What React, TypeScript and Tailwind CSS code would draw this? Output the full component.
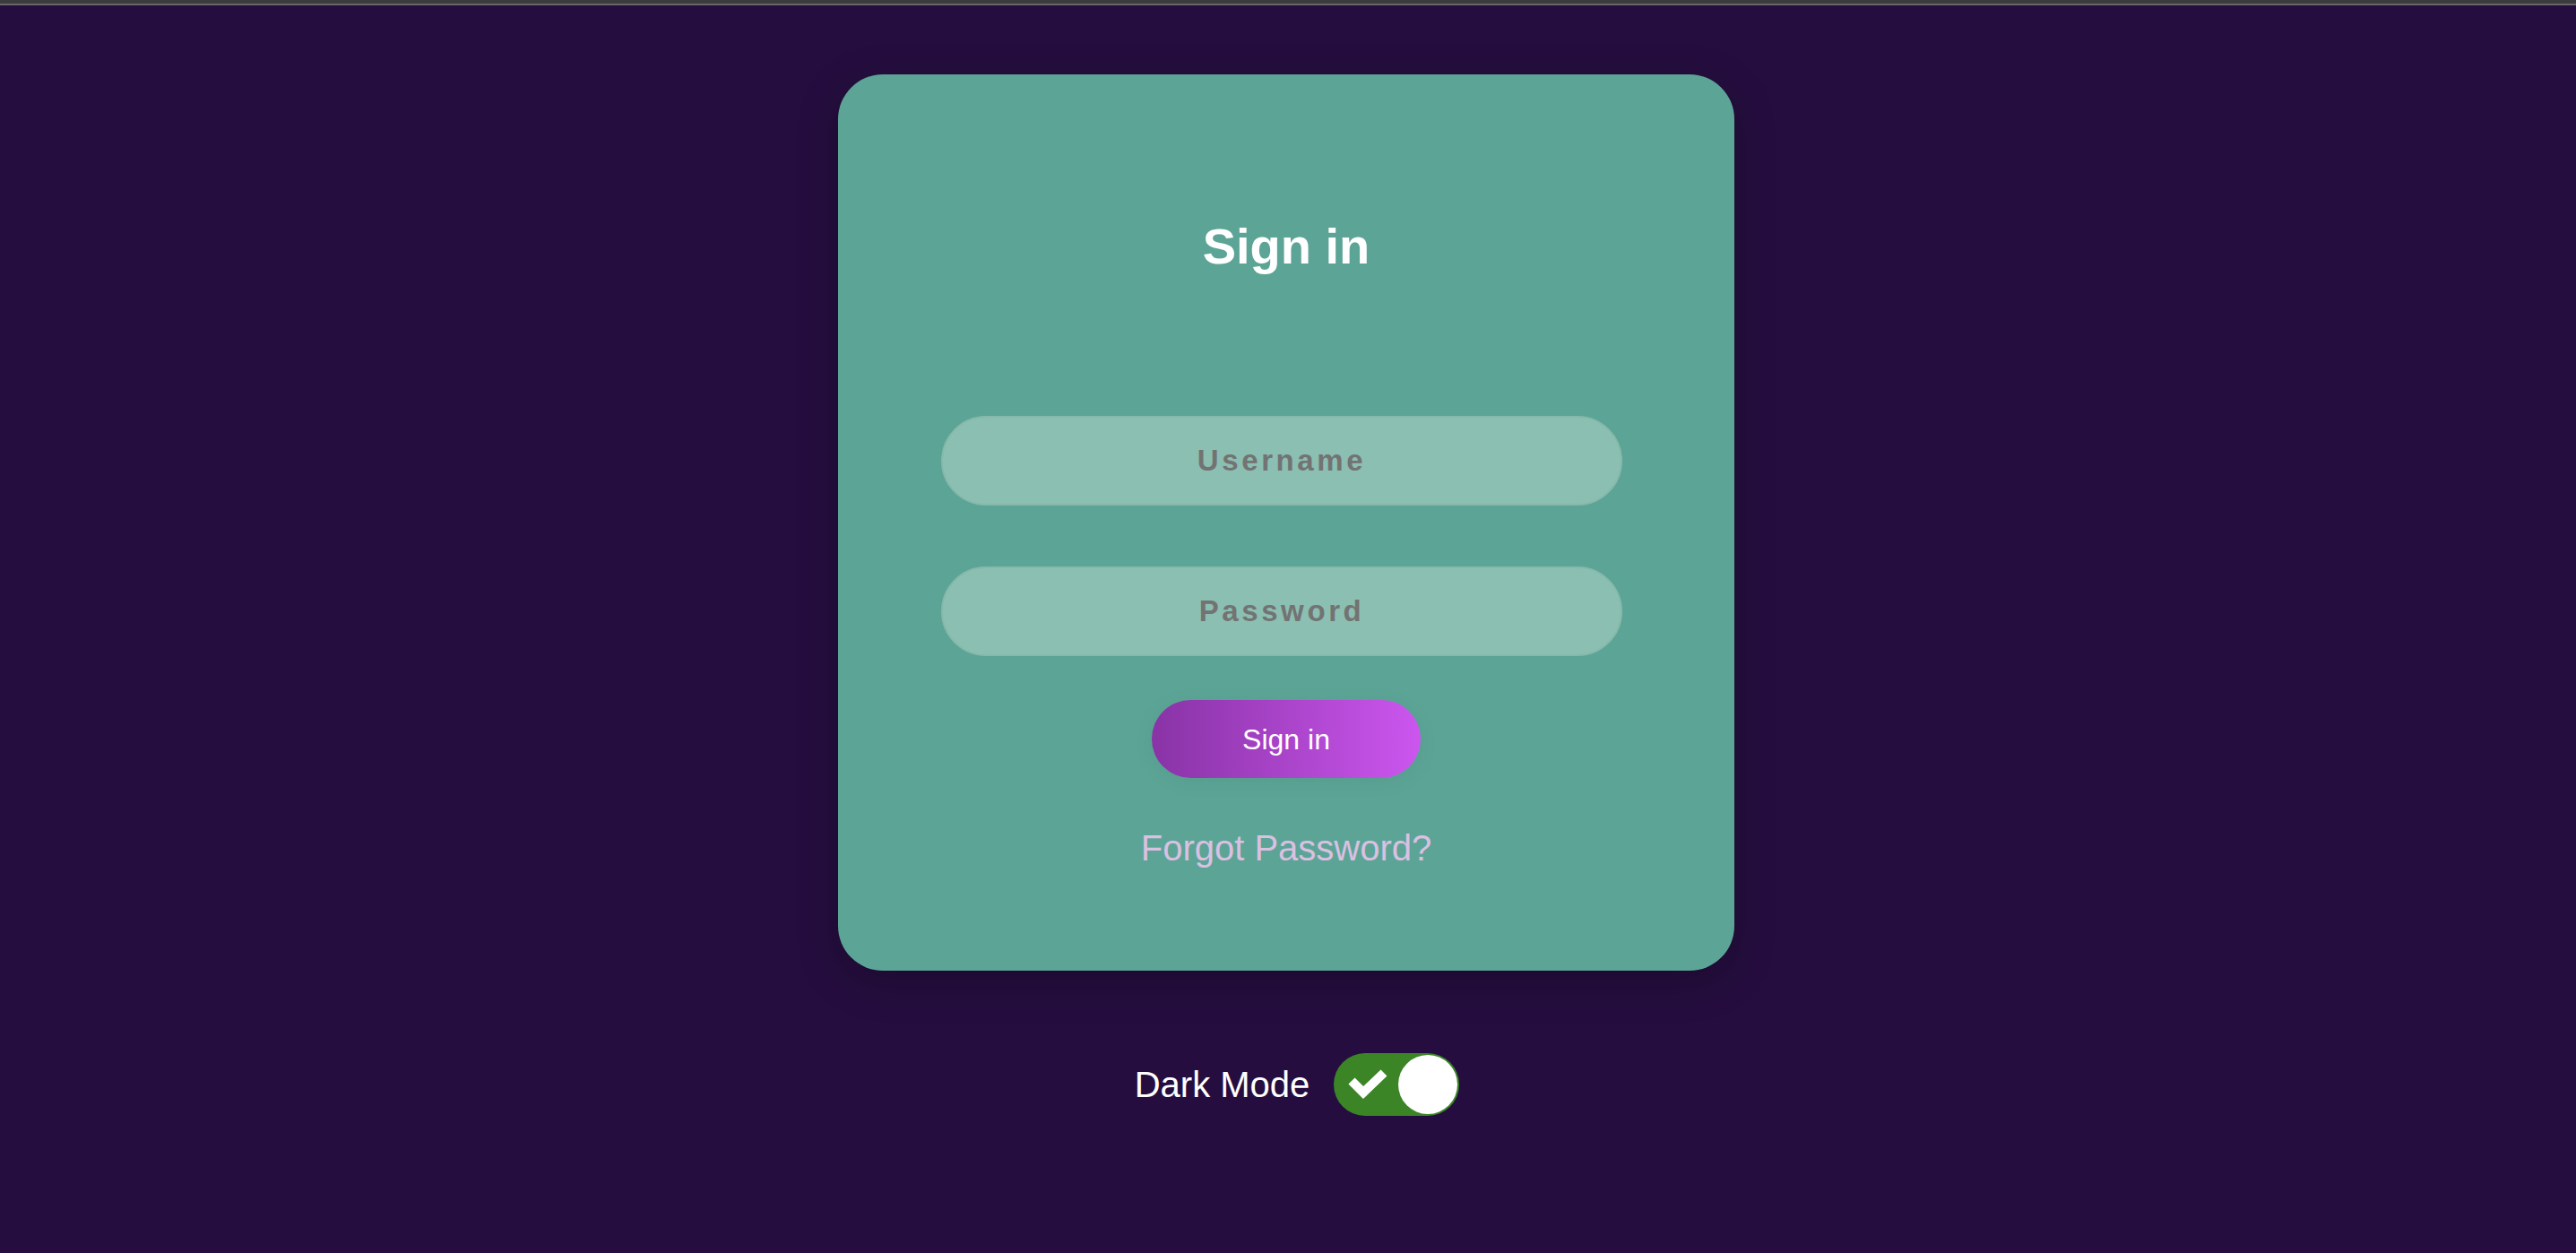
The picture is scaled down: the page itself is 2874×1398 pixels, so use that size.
import React from "react";

function DarkToggle() {
  return (
    <div className="relative flex h-[70px] w-[140px] items-center rounded-full bg-[#3c8527]">
      <svg width="70" height="70" viewBox="0 0 70 70" className="absolute left-0 top-0">
        <polyline points="20,31 33,44 56,22" fill="none" stroke="white" strokeWidth="10" strokeLinecap="butt" strokeLinejoin="miter" />
      </svg>
      <div className="ml-auto mr-[2px] h-[66px] w-[66px] rounded-full bg-white" />
    </div>
  );
}

export default function App() {
  return (
    <div className="flex min-h-screen flex-col bg-[#250e3f] font-['Liberation_Sans',Arial,sans-serif]">
      <div className="h-[4px] bg-[#3b3c3e]" />
      <div className="h-[2px] bg-[#67666a]" />
      <main className="flex flex-col items-center pt-[77px]">
        <div className="mr-[4px] flex h-[1000px] w-[1000px] flex-col items-center rounded-[50px] bg-[#5ca596] pt-[160px] shadow-[0_12px_45px_rgba(0,0,0,0.25)]">
          <h1 className="text-[56px] font-bold leading-[64px] text-white">Sign in</h1>
          <input
            placeholder="Username"
            className="mr-[10px] mt-[157px] h-[100px] w-[760px] rounded-full border-2 border-[#86b9ac] bg-[#8bbfb2] text-center text-[33px] font-bold tracking-[3.6px] text-[#555] outline-none placeholder:text-[#737373]"
          />
          <input
            type="password"
            placeholder="Password"
            className="mr-[10px] mt-[68px] h-[100px] w-[760px] rounded-full border-2 border-[#86b9ac] bg-[#8bbfb2] text-center text-[33px] font-bold tracking-[3.6px] text-[#555] outline-none placeholder:text-[#737373]"
          />
          <button className="mt-[49px] h-[87px] w-[300px] rounded-full bg-linear-to-r from-[#8933a6] to-[#cc56ef] text-[32px] text-white shadow-[0_4px_24px_rgba(0,0,0,0.06)]">
            Sign in
          </button>
          <a className="mt-[54px] text-[40px] leading-[48px] text-[#dac0e1]">Forgot Password?</a>
        </div>
        <div className="ml-[20px] mt-[92px] flex items-center gap-[27px]">
          <span className="text-[40px] leading-[48px] text-white">Dark Mode</span>
          <DarkToggle />
        </div>
      </main>
    </div>
  );
}
